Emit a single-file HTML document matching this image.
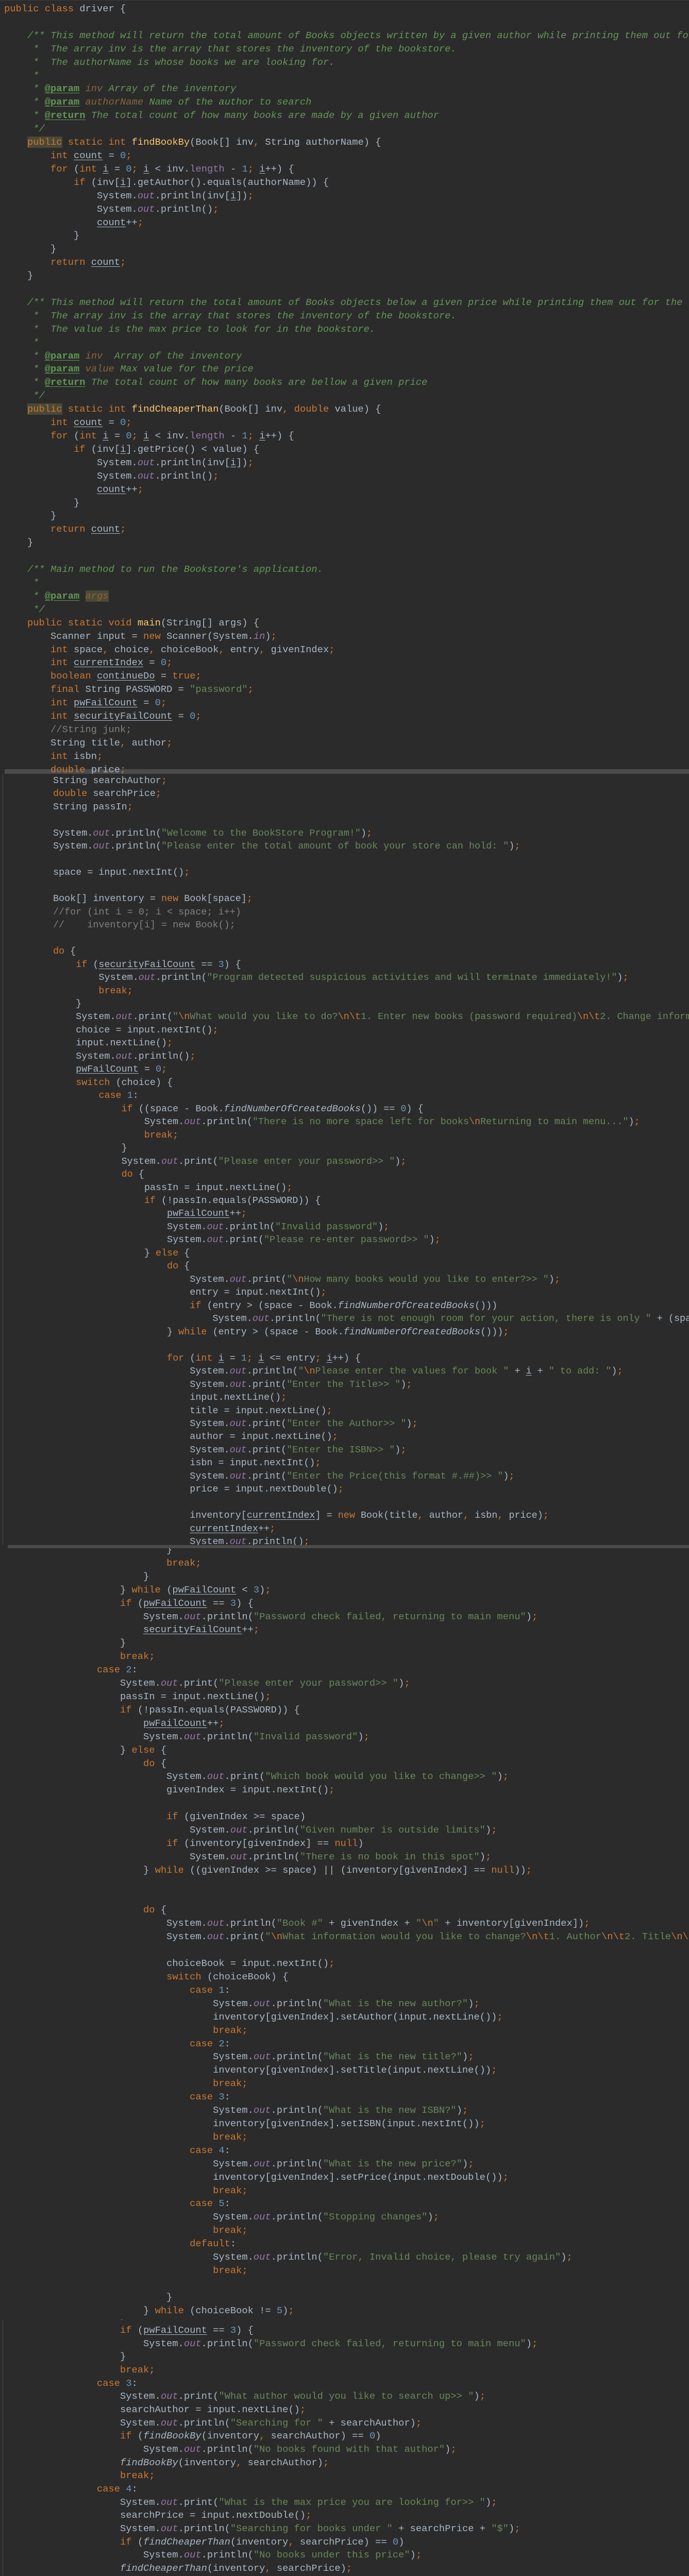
<!DOCTYPE html>
<html><head><meta charset="utf-8"><style>
html,body{margin:0;padding:0}
body{width:1337px;height:5296px;background:#2b2b2b;overflow:hidden;position:relative;font-family:"Liberation Mono",monospace;color:#a9b7c6}
.sec{position:absolute;left:0;width:1337px;overflow:hidden}
pre{position:absolute;margin:0;font-family:"Liberation Mono",monospace;white-space:pre;color:#a9b7c6}
pre *{line-height:0}
b{color:#cc7832;font-weight:normal}
s{color:#6a8759;text-decoration:none}
s b{color:#cc7832}
em{color:#9876aa;font-style:italic}
var{color:#6897bb;font-style:normal}
u{text-decoration:underline;text-underline-offset:3px}
i{font-style:italic}
.c{color:#629755;font-style:italic}
.t{color:#629755;font-weight:bold;text-decoration:underline;text-underline-offset:3px}
.pn{color:#8a653b}
.m{color:#ffc66d}
.g{color:#808080}
.f{color:#9876aa}
.hl{background:#4a4936}
.bar{position:absolute;background:#4b4b4b;z-index:0}
.gl{position:absolute;width:1px;background:#3b3b3b}
</style></head><body>
<div style="position:absolute;left:0;top:0;width:1337px;height:1px;background:#3c3c3c"></div>
<div class="bar" style="left:9px;top:1493px;width:1328px;height:9px"></div>
<div class="bar" style="left:15px;top:2999px;width:1322px;height:6px"></div>
<div class="gl" style="left:5px;top:1502px;height:1497px;background:#4a4a4a"></div>
<div class="gl" style="left:5px;top:4503px;height:793px;background:#4a4a4a"></div>

<div class="sec" style="top:0;height:1502px;z-index:1">
<pre style="left:8px;top:5px;font-size:18.75px;line-height:25.9px"><b>public class</b> driver {

    <span class="c">/** This method will return the total amount of Books objects written by a given author while printing them out for the user.</span>
<span class="c">     *  The array inv is the array that stores the inventory of the bookstore.</span>
<span class="c">     *  The authorName is whose books we are looking for.</span>
<span class="c">     *</span>
<span class="c">     * </span><span class="t">@param</span> <span class="c pn">inv</span><span class="c"> Array of the inventory</span>
<span class="c">     * </span><span class="t">@param</span> <span class="c pn">authorName</span><span class="c"> Name of the author to search</span>
<span class="c">     * </span><span class="t">@return</span><span class="c"> The total count of how many books are made by a given author</span>
<span class="c">     */</span>
    <b class="hl">public</b> <b>static int</b> <span class="m">findBookBy</span>(Book[] inv<b>,</b> String authorName) {
        <b>int</b> <u>count</u> = <var>0</var><b>;</b>
        <b>for</b> (<b>int</b> <u>i</u> = <var>0</var><b>;</b> <u>i</u> &lt; inv.<span class="f">length</span> - <var>1</var><b>;</b> <u>i</u>++) {
            <b>if</b> (inv[<u>i</u>].getAuthor().equals(authorName)) {
                System.<em>out</em>.println(inv[<u>i</u>])<b>;</b>
                System.<em>out</em>.println()<b>;</b>
                <u>count</u>++<b>;</b>
            }
        }
        <b>return</b> <u>count</u><b>;</b>
    }

    <span class="c">/** This method will return the total amount of Books objects below a given price while printing them out for the user.</span>
<span class="c">     *  The array inv is the array that stores the inventory of the bookstore.</span>
<span class="c">     *  The value is the max price to look for in the bookstore.</span>
<span class="c">     *</span>
<span class="c">     * </span><span class="t">@param</span> <span class="c pn">inv</span><span class="c">  Array of the inventory</span>
<span class="c">     * </span><span class="t">@param</span> <span class="c pn">value</span><span class="c"> Max value for the price</span>
<span class="c">     * </span><span class="t">@return</span><span class="c"> The total count of how many books are bellow a given price</span>
<span class="c">     */</span>
    <b class="hl">public</b> <b>static int</b> <span class="m">findCheaperThan</span>(Book[] inv<b>,</b> <b>double</b> value) {
        <b>int</b> <u>count</u> = <var>0</var><b>;</b>
        <b>for</b> (<b>int</b> <u>i</u> = <var>0</var><b>;</b> <u>i</u> &lt; inv.<span class="f">length</span> - <var>1</var><b>;</b> <u>i</u>++) {
            <b>if</b> (inv[<u>i</u>].getPrice() &lt; value) {
                System.<em>out</em>.println(inv[<u>i</u>])<b>;</b>
                System.<em>out</em>.println()<b>;</b>
                <u>count</u>++<b>;</b>
            }
        }
        <b>return</b> <u>count</u><b>;</b>
    }

    <span class="c">/** Main method to run the Bookstore's application.</span>
<span class="c">     *</span>
<span class="c">     * </span><span class="t">@param</span> <span class="c pn hl">args</span>
<span class="c">     */</span>
    <b>public static void</b> <span class="m">main</span>(String[] args) {
        Scanner input = <b>new</b> Scanner(System.<em>in</em>)<b>;</b>
        <b>int</b> space<b>,</b> choice<b>,</b> choiceBook<b>,</b> entry<b>,</b> givenIndex<b>;</b>
        <b>int</b> <u>currentIndex</u> = <var>0</var><b>;</b>
        <b>boolean</b> <u>continueDo</u> = <b>true;</b>
        <b>final</b> String PASSWORD = <s>"password"</s><b>;</b>
        <b>int</b> <u>pwFailCount</u> = <var>0</var><b>;</b>
        <b>int</b> <u>securityFailCount</u> = <var>0</var><b>;</b>
        <span class="g">//String junk;</span>
        String title<b>,</b> author<b>;</b>
        <b>int</b> isbn<b>;</b>
        <b>double</b> price<b>;</b></pre>
</div>

<div class="sec" style="top:1502px;height:1497px;z-index:1">
<pre style="left:14.5px;top:1px;font-size:18.43px;line-height:25.47px">        String searchAuthor<b>;</b>
        <b>double</b> searchPrice<b>;</b>
        String passIn<b>;</b>

        System.<em>out</em>.println(<s>"Welcome to the BookStore Program!"</s>)<b>;</b>
        System.<em>out</em>.println(<s>"Please enter the total amount of book your store can hold: "</s>)<b>;</b>

        space = input.nextInt()<b>;</b>

        Book[] inventory = <b>new</b> Book[space]<b>;</b>
        <span class="g">//for (int i = 0; i &lt; space; i++)</span>
        <span class="g">//    inventory[i] = new Book();</span>

        <b>do</b> {
            <b>if</b> (<u>securityFailCount</u> == <var>3</var>) {
                System.<em>out</em>.println(<s>"Program detected suspicious activities and will terminate immediately!"</s>)<b>;</b>
                <b>break;</b>
            }
            System.<em>out</em>.print(<s>"<b>\n</b>What would you like to do?<b>\n\t</b>1. Enter new books (password required)<b>\n\t</b>2. Change information of a book (password required)<b>\n\t</b>3. Search"</s>
            choice = input.nextInt()<b>;</b>
            input.nextLine()<b>;</b>
            System.<em>out</em>.println()<b>;</b>
            <u>pwFailCount</u> = <var>0</var><b>;</b>
            <b>switch</b> (choice) {
                <b>case</b> <var>1</var>:
                    <b>if</b> ((space - Book.<i>findNumberOfCreatedBooks</i>()) == <var>0</var>) {
                        System.<em>out</em>.println(<s>"There is no more space left for books<b>\n</b>Returning to main menu..."</s>)<b>;</b>
                        <b>break;</b>
                    }
                    System.<em>out</em>.print(<s>"Please enter your password&gt;&gt; "</s>)<b>;</b>
                    <b>do</b> {
                        passIn = input.nextLine()<b>;</b>
                        <b>if</b> (!passIn.equals(PASSWORD)) {
                            <u>pwFailCount</u>++<b>;</b>
                            System.<em>out</em>.println(<s>"Invalid password"</s>)<b>;</b>
                            System.<em>out</em>.print(<s>"Please re-enter password&gt;&gt; "</s>)<b>;</b>
                        } <b>else</b> {
                            <b>do</b> {
                                System.<em>out</em>.print(<s>"<b>\n</b>How many books would you like to enter?&gt;&gt; "</s>)<b>;</b>
                                entry = input.nextInt()<b>;</b>
                                <b>if</b> (entry &gt; (space - Book.<i>findNumberOfCreatedBooks</i>()))
                                    System.<em>out</em>.println(<s>"There is not enough room for your action, there is only "</s> + (space - Book.<i>findNumberOfCreatedBooks</i>()) + <s>" spots"</s>
                            } <b>while</b> (entry &gt; (space - Book.<i>findNumberOfCreatedBooks</i>()))<b>;</b>

                            <b>for</b> (<b>int</b> <u>i</u> = <var>1</var><b>;</b> <u>i</u> &lt;= entry<b>;</b> <u>i</u>++) {
                                System.<em>out</em>.println(<s>"<b>\n</b>Please enter the values for book "</s> + <u>i</u> + <s>" to add: "</s>)<b>;</b>
                                System.<em>out</em>.print(<s>"Enter the Title&gt;&gt; "</s>)<b>;</b>
                                input.nextLine()<b>;</b>
                                title = input.nextLine()<b>;</b>
                                System.<em>out</em>.print(<s>"Enter the Author&gt;&gt; "</s>)<b>;</b>
                                author = input.nextLine()<b>;</b>
                                System.<em>out</em>.print(<s>"Enter the ISBN&gt;&gt; "</s>)<b>;</b>
                                isbn = input.nextInt()<b>;</b>
                                System.<em>out</em>.print(<s>"Enter the Price(this format #.##)&gt;&gt; "</s>)<b>;</b>
                                price = input.nextDouble()<b>;</b>

                                inventory[<u>currentIndex</u>] = <b>new</b> Book(title<b>,</b> author<b>,</b> isbn<b>,</b> price)<b>;</b>
                                <u>currentIndex</u>++<b>;</b>
                                System.<em>out</em>.println()<b>;</b></pre>
</div>

<div class="sec" style="top:3005px;height:1498px;z-index:1">
<pre style="left:8px;top:-9px;font-size:18.75px;line-height:25.9px">                            }
                            <b>break;</b>
                        }
                    } <b>while</b> (<u>pwFailCount</u> &lt; <var>3</var>)<b>;</b>
                    <b>if</b> (<u>pwFailCount</u> == <var>3</var>) {
                        System.<em>out</em>.println(<s>"Password check failed, returning to main menu"</s>)<b>;</b>
                        <u>securityFailCount</u>++<b>;</b>
                    }
                    <b>break;</b>
                <b>case</b> <var>2</var>:
                    System.<em>out</em>.print(<s>"Please enter your password&gt;&gt; "</s>)<b>;</b>
                    passIn = input.nextLine()<b>;</b>
                    <b>if</b> (!passIn.equals(PASSWORD)) {
                        <u>pwFailCount</u>++<b>;</b>
                        System.<em>out</em>.println(<s>"Invalid password"</s>)<b>;</b>
                    } <b>else</b> {
                        <b>do</b> {
                            System.<em>out</em>.print(<s>"Which book would you like to change&gt;&gt; "</s>)<b>;</b>
                            givenIndex = input.nextInt()<b>;</b>

                            <b>if</b> (givenIndex &gt;= space)
                                System.<em>out</em>.println(<s>"Given number is outside limits"</s>)<b>;</b>
                            <b>if</b> (inventory[givenIndex] == <b>null</b>)
                                System.<em>out</em>.println(<s>"There is no book in this spot"</s>)<b>;</b>
                        } <b>while</b> ((givenIndex &gt;= space) || (inventory[givenIndex] == <b>null</b>))<b>;</b>


                        <b>do</b> {
                            System.<em>out</em>.println(<s>"Book #"</s> + givenIndex + <s>"<b>\n</b>"</s> + inventory[givenIndex])<b>;</b>
                            System.<em>out</em>.print(<s>"<b>\n</b>What information would you like to change?<b>\n\t</b>1. Author<b>\n\t</b>2. Title<b>\n\t</b>3. ISBN<b>\n\t</b>4. Price"</s>

                            choiceBook = input.nextInt()<b>;</b>
                            <b>switch</b> (choiceBook) {
                                <b>case</b> <var>1</var>:
                                    System.<em>out</em>.println(<s>"What is the new author?"</s>)<b>;</b>
                                    inventory[givenIndex].setAuthor(input.nextLine())<b>;</b>
                                    <b>break;</b>
                                <b>case</b> <var>2</var>:
                                    System.<em>out</em>.println(<s>"What is the new title?"</s>)<b>;</b>
                                    inventory[givenIndex].setTitle(input.nextLine())<b>;</b>
                                    <b>break;</b>
                                <b>case</b> <var>3</var>:
                                    System.<em>out</em>.println(<s>"What is the new ISBN?"</s>)<b>;</b>
                                    inventory[givenIndex].setISBN(input.nextInt())<b>;</b>
                                    <b>break;</b>
                                <b>case</b> <var>4</var>:
                                    System.<em>out</em>.println(<s>"What is the new price?"</s>)<b>;</b>
                                    inventory[givenIndex].setPrice(input.nextDouble())<b>;</b>
                                    <b>break;</b>
                                <b>case</b> <var>5</var>:
                                    System.<em>out</em>.println(<s>"Stopping changes"</s>)<b>;</b>
                                    <b>break;</b>
                                <b>default</b>:
                                    System.<em>out</em>.println(<s>"Error, Invalid choice, please try again"</s>)<b>;</b>
                                    <b>break;</b>

                            }
                        } <b>while</b> (choiceBook != <var>5</var>)<b>;</b>
                    }</pre>
</div>

<div class="sec" style="top:4503px;height:793px;z-index:1">
<pre style="left:8px;top:8px;font-size:18.75px;line-height:25.65px">                    <b>if</b> (<u>pwFailCount</u> == <var>3</var>) {
                        System.<em>out</em>.println(<s>"Password check failed, returning to main menu"</s>)<b>;</b>
                    }
                    <b>break;</b>
                <b>case</b> <var>3</var>:
                    System.<em>out</em>.print(<s>"What author would you like to search up&gt;&gt; "</s>)<b>;</b>
                    searchAuthor = input.nextLine()<b>;</b>
                    System.<em>out</em>.println(<s>"Searching for "</s> + searchAuthor)<b>;</b>
                    <b>if</b> (<i>findBookBy</i>(inventory<b>,</b> searchAuthor) == <var>0</var>)
                        System.<em>out</em>.println(<s>"No books found with that author"</s>)<b>;</b>
                    <i>findBookBy</i>(inventory<b>,</b> searchAuthor)<b>;</b>
                    <b>break;</b>
                <b>case</b> <var>4</var>:
                    System.<em>out</em>.print(<s>"What is the max price you are looking for&gt;&gt; "</s>)<b>;</b>
                    searchPrice = input.nextDouble()<b>;</b>
                    System.<em>out</em>.println(<s>"Searching for books under "</s> + searchPrice + <s>"$"</s>)<b>;</b>
                    <b>if</b> (<i>findCheaperThan</i>(inventory<b>,</b> searchPrice) == <var>0</var>)
                        System.<em>out</em>.println(<s>"No books under this price"</s>)<b>;</b>
                    <i>findCheaperThan</i>(inventory<b>,</b> searchPrice)<b>;</b>
                    <b>break;</b>
                <b>case</b> <var>5</var>:
                    System.<em>out</em>.println(<s>"Program Terminated"</s>)<b>;</b>
                    System.<em>out</em>.println(<s>"Thank you for using the program, have a nice day!"</s>)<b>;</b>
                    <u>continueDo</u> = <b>false;</b>
                    <b>break;</b>
                <b>default</b>:
                    System.<em>out</em>.println(<s>"Error, Invalid choice, please try again"</s>)<b>;</b>
                    <b>break;</b>
            }
        } <b>while</b> (<u>continueDo</u>)<b>;</b></pre>
</div>
</body></html>
